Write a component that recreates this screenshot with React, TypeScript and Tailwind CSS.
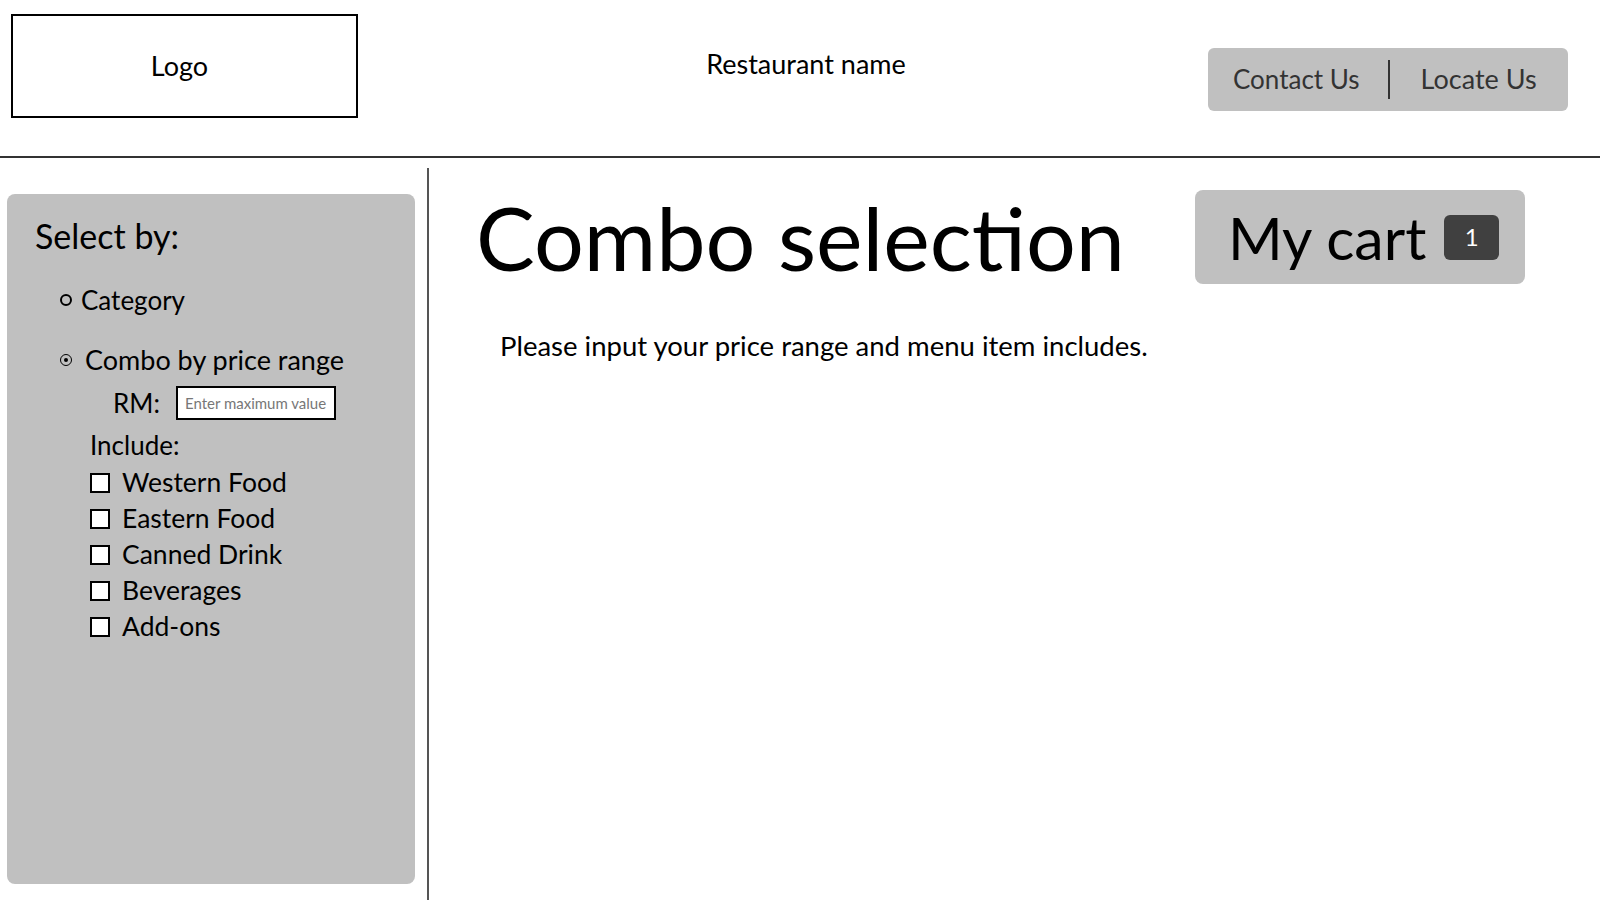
import React from "react";

const includes = ["Western Food", "Eastern Food", "Canned Drink", "Beverages", "Add-ons"];

function Header() {
  return (
    <header className="flex items-start h-[158px] border-b-2 border-[#333] px-[11px] pt-[14px]">
      <div className="w-[347px] h-[104px] border-2 border-black flex items-center justify-center pr-[10px] text-[27px] text-black">
        Logo
      </div>
      <div className="flex-1 flex justify-center pl-[46px] pt-[34px] text-[27px] leading-[32px] text-black">
        Restaurant name
      </div>
      <div className="mt-[34px] mr-[21px] w-[360px] h-[63px] rounded-md bg-[#c0c0c0] flex items-center text-[26px] text-[#333]">
        <span className="pl-[25px] pr-[28px]">Contact Us</span>
        <span className="w-[2px] h-[39px] bg-[#333]" />
        <span className="pl-[31px] text-[27px]">Locate Us</span>
      </div>
    </header>
  );
}

function Sidebar() {
  return (
    <aside className="w-[427px] pl-[7px] pr-[12px] pt-[36px]">
      <div className="h-[690px] rounded-lg bg-[#c0c0c0] pt-[22px] text-black">
        <p className="pl-[28px] text-[34px] leading-[40px]">Select by:</p>

        <div className="mt-[28px] pl-[53px] flex items-center h-[32px] text-[26px]">
          <span className="w-[12px] h-[12px] rounded-full border-2 border-black" />
          <span className="ml-[9px]">Category</span>
        </div>

        <div className="mt-[28px] pl-[53px] flex items-center h-[32px] text-[27px]">
          <span className="w-[12px] h-[12px] rounded-full border-[1.5px] border-black flex items-center justify-center">
            <span className="w-[4px] h-[4px] rounded-full bg-black" />
          </span>
          <span className="ml-[13px]">Combo by price range</span>
        </div>

        <div className="mt-[10px] pl-[106px] flex items-center h-[34px]">
          <span className="text-[26px]">RM:</span>
          <input
            className="ml-[16px] w-[160px] h-[34px] border-2 border-black bg-white px-[7px] text-[15px] text-black placeholder:text-[#777] outline-none"
            placeholder="Enter maximum value"
          />
        </div>

        <p className="mt-[9px] pl-[83px] text-[26px] leading-[32px]">Include:</p>

        <div className="mt-[4px] pl-[83px]">
          {includes.map((item) => (
            <label key={item} className="flex items-center h-[36px] text-[26.5px]">
              <span className="w-[20px] h-[20px] border-2 border-black bg-white" />
              <span className="ml-[12px]">{item}</span>
            </label>
          ))}
        </div>
      </div>
    </aside>
  );
}

export default function App() {
  return (
    <div className="w-[1600px] h-[900px] bg-white overflow-hidden" style={{ fontFamily: "Lato, 'Liberation Sans', sans-serif" }}>
      <Header />
      <div className="flex h-[742px]">
        <Sidebar />
        <div className="mt-[10px] w-[2px] bg-[#555]" />
        <main className="flex-1 pt-[32px] pl-[47px] pr-[75px]">
          <div className="flex items-center justify-between">
            <h1 className="text-[88px] leading-none text-black">Combo selection</h1>
            <div className="w-[330px] h-[94px] rounded-lg bg-[#c0c0c0] flex items-center pl-[33px]">
              <span className="text-[59px] leading-none text-black">My cart</span>
              <span className="ml-[18px] w-[55px] h-[45px] rounded-md bg-[#404040] text-white text-[24px] flex items-center justify-center">
                1
              </span>
            </div>
          </div>
          <p className="mt-[46px] pl-[24px] text-[27.5px] leading-[32px] text-black">
            Please input your price range and menu item includes.
          </p>
        </main>
      </div>
    </div>
  );
}
